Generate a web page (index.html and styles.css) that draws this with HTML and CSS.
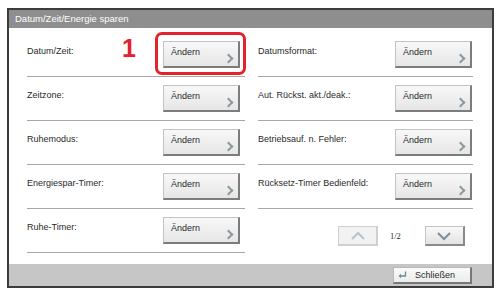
FILE: index.html
```html
<!DOCTYPE html>
<html lang="de">
<head>
    <meta charset="UTF-8">
    <title>Datum/Zeit/Energie sparen</title>
    <link rel="stylesheet" href="styles.css">
</head>
<body>
    <div class="frame">
        <div class="titlebar">Datum/Zeit/Energie sparen</div>

        <div class="content">
            <div class="column left">
                <div class="row">
                    <span class="label">Datum/Zeit:</span>
                    <span class="step">1</span>
                    <div class="marked">
                        <button class="change">Ändern<span class="chev"></span></button>
                    </div>
                </div>
                <div class="row">
                    <span class="label">Zeitzone:</span>
                    <button class="change">Ändern<span class="chev"></span></button>
                </div>
                <div class="row">
                    <span class="label">Ruhemodus:</span>
                    <button class="change">Ändern<span class="chev"></span></button>
                </div>
                <div class="row">
                    <span class="label">Energiespar-Timer:</span>
                    <button class="change">Ändern<span class="chev"></span></button>
                </div>
                <div class="row">
                    <span class="label">Ruhe-Timer:</span>
                    <button class="change">Ändern<span class="chev"></span></button>
                </div>
            </div>

            <div class="column right">
                <div class="row">
                    <span class="label">Datumsformat:</span>
                    <button class="change">Ändern<span class="chev"></span></button>
                </div>
                <div class="row">
                    <span class="label">Aut. Rückst. akt./deak.:</span>
                    <button class="change">Ändern<span class="chev"></span></button>
                </div>
                <div class="row">
                    <span class="label">Betriebsauf. n. Fehler:</span>
                    <button class="change">Ändern<span class="chev"></span></button>
                </div>
                <div class="row">
                    <span class="label">Rücksetz-Timer Bedienfeld:</span>
                    <button class="change">Ändern<span class="chev"></span></button>
                </div>
                <div class="pager">
                    <button class="page-btn disabled">
                        <svg width="16" height="10" viewBox="0 0 16 10"><path d="M2 8 L8 2 L14 8" fill="none" stroke="#b8c4c8" stroke-width="2"/></svg>
                    </button>
                    <span class="page-no">1/2</span>
                    <button class="page-btn">
                        <svg width="16" height="10" viewBox="0 0 16 10"><path d="M2 2 L8 8 L14 2" fill="none" stroke="#7d8f96" stroke-width="2"/></svg>
                    </button>
                </div>
            </div>
        </div>

        <div class="footer">
            <button class="close">
                <svg width="9" height="8" viewBox="0 0 9 8"><path d="M7.5 0.5 V5 H2" fill="none" stroke="#6b8a9a" stroke-width="1.3"/><path d="M0.5 5 L3 2.8 V7.2 Z" fill="#6b8a9a"/></svg>
                <span>Schließen</span>
            </button>
        </div>
    </div>
</body>
</html>
```

FILE: styles.css
```css
body {
    margin: 0;
    background: white;
    font-family: "Liberation Sans", Arial, sans-serif;
    color: #2a2a2a;
}

.frame {
    margin: 8px 0 0 7px;
    width: 483px;
    height: 276px;
    border: 2px solid #3c3c3c;
    display: flex;
    flex-direction: column;
    background: white;
}

.titlebar {
    height: 18px;
    line-height: 18px;
    background: #8e8e8e;
    color: white;
    font-size: 9.5px;
    padding-left: 6px;
}

.content {
    flex: 1;
    display: grid;
    grid-template-columns: 218px 215px;
    column-gap: 13px;
    padding: 5px 0 0 18px;
}

.row {
    position: relative;
    display: flex;
    justify-content: space-between;
    align-items: flex-start;
    height: 35px;
    padding-top: 8px;
    border-bottom: 1px solid #a8a8a8;
}

.label {
    font-size: 9px;
    padding-top: 5px;
}

.left .change {
    margin-right: 5px;
}

.right .change {
    margin-right: 1px;
}

.change {
    position: relative;
    display: flex;
    align-items: flex-start;
    width: 77px;
    height: 27px;
    padding: 5px 0 0 7px;
    font-family: inherit;
    font-size: 9px;
    color: #2a2a2a;
    background: linear-gradient(#f8f8f8, #e6e6e6);
    border: 1px solid #c4c4c4;
    border-right: 2px solid #7c7c7c;
    border-bottom: 2px solid #7c7c7c;
}

.chev {
    position: absolute;
    right: 6px;
    bottom: 4px;
    width: 5px;
    height: 5px;
    border-top: 2px solid #8c9aa0;
    border-right: 2px solid #8c9aa0;
    transform: rotate(45deg);
}

/* annotation over the first button */
.marked {
    position: relative;
}

.marked::after {
    content: "";
    position: absolute;
    left: -8px;
    top: -9px;
    right: -1px;
    bottom: -7px;
    border: 3px solid #e3222b;
    border-radius: 7px;
}

.step {
    position: absolute;
    left: 95px;
    top: 1px;
    color: #e3222b;
    font-weight: bold;
    font-size: 25px;
}

.pager {
    display: flex;
    align-items: center;
    padding: 17px 0 0 80px;
}

.page-btn {
    width: 40px;
    height: 20px;
    padding: 0;
    display: flex;
    align-items: center;
    justify-content: center;
    background: linear-gradient(#f8f8f8, #e4e4e4);
    border: 1px solid #c4c4c4;
    border-right: 2px solid #8a8a8a;
    border-bottom: 2px solid #8a8a8a;
}

.page-btn.disabled {
    background: #f2f2f2;
    border-color: #d0d0d0;
}

.page-no {
    font-size: 8.5px;
    font-family: "Liberation Serif", serif;
    margin: 0 24px 0 12px;
}

.footer {
    height: 22px;
    background: #c6c6c6;
    display: flex;
    justify-content: flex-end;
    align-items: flex-start;
    padding-right: 20px;
}

.close {
    margin-top: 3px;
    width: 79px;
    height: 17px;
    display: flex;
    align-items: center;
    gap: 8px;
    padding: 0 0 0 4px;
    font-family: inherit;
    font-size: 9px;
    color: #2a2a2a;
    background: linear-gradient(#fafafa, #ececec);
    border: 1px solid #b8b8b8;
    border-right: 2px solid #777;
    border-bottom: 2px solid #777;
}
```
